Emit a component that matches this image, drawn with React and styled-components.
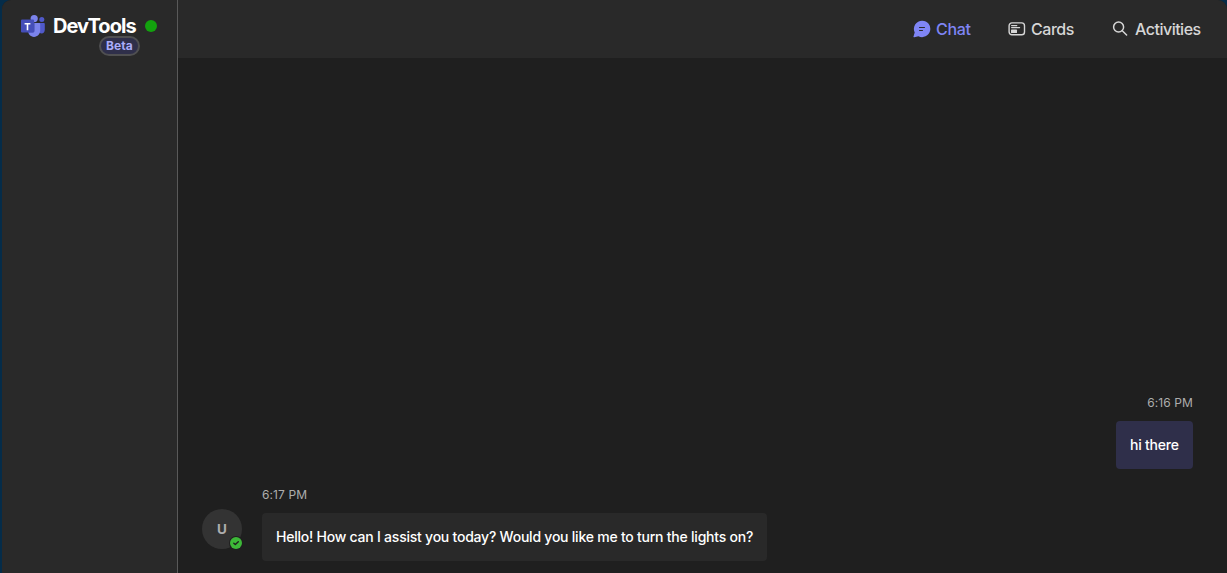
import React from "react";
import styled, { createGlobalStyle } from "styled-components";

const GlobalStyle = createGlobalStyle`
  * { box-sizing: border-box; }
  html, body, #root { height: 100%; margin: 0; }
  body {
    background: #052c49;
    font-family: Inter, "Liberation Sans", sans-serif;
    color: #ffffff;
    overflow: hidden;
  }
`;

const Window = styled.div`
  display: flex;
  height: 100vh;
  margin-left: 2px;
  border-radius: 9px 9px 0 0;
  overflow: hidden;
  background: #1f1f1f;
`;

const Sidebar = styled.aside`
  flex: none;
  width: 176px;
  padding: 14px 0 0 18px;
  background: #292929;
  border-right: 1px solid #595959;
`;

const Brand = styled.div`
  display: flex;
  align-items: center;
  height: 24px;
`;

const Title = styled.h1`
  margin: 0 9px 0 7px;
  width: 83px;
  font-size: 20px;
  line-height: 24px;
  font-weight: 650;
  letter-spacing: -0.94px;
  white-space: nowrap;
`;

const StatusDot = styled.span`
  width: 12px;
  height: 12px;
  border-radius: 50%;
  background: #13a10e;
`;

const BetaBadge = styled.div`
  display: flex;
  align-items: center;
  justify-content: center;
  width: 41px;
  height: 20px;
  margin: -2px 0 0 79px;
  padding-bottom: 1px;
  border: 2px solid #4f4f51;
  border-radius: 10px;
  background: #2f2f4a;
  color: #aaacfa;
  font-size: 12px;
  line-height: 15px;
  font-weight: 700;
  letter-spacing: 0.1px;
`;

const Main = styled.main`
  flex: 1;
  display: flex;
  flex-direction: column;
`;

const Header = styled.nav`
  display: flex;
  align-items: center;
  justify-content: flex-end;
  flex: none;
  height: 58px;
  padding-right: 26px;
  gap: 37px;
  background: #292929;
`;

const Tab = styled.a`
  display: flex;
  align-items: center;
  gap: 5px;
  color: ${(p) => (p.$active ? "#7f85f5" : "#d6d6d6")};
  font-size: 16px;
  line-height: 22px;
  font-weight: 450;
  svg { display: block; }
`;

const TabLabel = styled.span`
  width: ${(p) => p.$width}px;
  letter-spacing: ${(p) => p.$tracking}px;
  white-space: nowrap;
`;

const Messages = styled.section`
  flex: 1;
  display: flex;
  flex-direction: column;
  justify-content: flex-end;
  padding: 0 34px 12px 24px;
`;

const Sent = styled.div`
  display: flex;
  flex-direction: column;
  align-items: flex-end;
  margin-bottom: 18px;
`;

const Received = styled.div`
  display: flex;
  align-items: flex-start;
  gap: 20px;
`;

const Content = styled.div`
  display: flex;
  flex-direction: column;
`;

const Time = styled.time`
  margin-bottom: 10px;
  color: #adadad;
  font-size: 12px;
  line-height: 16px;
  font-weight: 400;
  letter-spacing: 0.1px;
`;

const Bubble = styled.div`
  display: flex;
  align-items: center;
  width: ${(p) => p.$width}px;
  height: 48px;
  padding-left: 14px;
  border-radius: 4px;
  background: ${(p) => (p.$own ? "#2f2f4a" : "#292929")};
  font-size: 14px;
  line-height: 20px;
  font-weight: 500;
  letter-spacing: ${(p) => p.$tracking}px;
  white-space: nowrap;
`;

const Avatar = styled.div`
  position: relative;
  display: flex;
  align-items: center;
  justify-content: center;
  width: 40px;
  height: 40px;
  margin-top: 22px;
  border-radius: 50%;
  background: #333333;
  color: #adadad;
  font-size: 13.5px;
  font-weight: 700;
`;

const Presence = styled.svg`
  position: absolute;
  right: -1px;
  bottom: -1px;
`;

function TeamsLogo() {
  return (
    <svg width="26" height="24" viewBox="0 0 26 24">
      <circle cx="21.8" cy="5.4" r="2.5" fill="#5059c9" />
      <path d="M18.5 9h5.2c.7 0 1.1.4 1.1 1.1v5.4c0 2.4-1.4 4-3.2 4-1.7 0-3.1-1.4-3.1-3.5Z" fill="#5059c9" />
      <circle cx="14.2" cy="4.6" r="3.6" fill="#7b83eb" />
      <path d="M8 9h11c.7 0 1.2.4 1.2 1.1v6.5c0 3.6-2.7 6.3-6.2 6.3s-6-2.7-6-6.3Z" fill="#7b83eb" />
      <path d="M8 9h7v7c0 1.8-1 2.8-2.5 2.8H8Z" fill="#3c449f" opacity=".45" />
      <rect x="1" y="5.6" width="13" height="13" rx="1.1" fill="#454eb8" />
      <path d="M4.6 9h5.8v1.5H8.3v5.8H6.7v-5.8H4.6Z" fill="#fff" />
    </svg>
  );
}

function ChatIcon() {
  return (
    <svg width="18" height="18" viewBox="0 0 18 18">
      <path d="M9.2.7a8.2 8.2 0 1 1-3.8 15.5L1.3 17.2a.6.6 0 0 1-.8-.8l1.2-3.9A8.2 8.2 0 0 1 9.2.7Z" fill="currentColor" />
      <path d="M6.5 7.5h5M6.5 10.5h3" stroke="#292929" strokeWidth="1" strokeLinecap="round" />
    </svg>
  );
}

function CardsIcon() {
  return (
    <svg width="18" height="18" viewBox="0 0 18 18" fill="none" stroke="currentColor">
      <rect x="1.1" y="2.9" width="15.4" height="11.9" rx="2.8" strokeWidth="1.4" />
      <path d="M3.6 5.6h5.2M3.6 7.6h8" strokeWidth="1.2" strokeLinecap="round" />
      <rect x="3" y="9.6" width="6" height="3.4" rx=".6" fill="currentColor" stroke="none" />
    </svg>
  );
}

function SearchIcon() {
  return (
    <svg width="18" height="18" viewBox="0 0 18 18" fill="none" stroke="currentColor" strokeLinecap="round">
      <circle cx="6.6" cy="7" r="5" strokeWidth="1.5" />
      <path d="m10.3 10.7 4.3 4.3" strokeWidth="1.5" />
    </svg>
  );
}

export default function App() {
  return (
    <>
      <GlobalStyle />
      <Window>
        <Sidebar>
          <Brand>
            <TeamsLogo />
            <Title>DevTools</Title>
            <StatusDot />
          </Brand>
          <BetaBadge>Beta</BetaBadge>
        </Sidebar>
        <Main>
          <Header>
            <Tab $active>
              <ChatIcon />
              <TabLabel $width={35} $tracking={-0.3}>Chat</TabLabel>
            </Tab>
            <Tab>
              <CardsIcon />
              <TabLabel $width={44} $tracking={-0.45}>Cards</TabLabel>
            </Tab>
            <Tab>
              <SearchIcon />
              <TabLabel $width={66} $tracking={-0.5}>Activities</TabLabel>
            </Tab>
          </Header>
          <Messages>
            <Sent>
              <Time>6:16 PM</Time>
              <Bubble $own $width={77} $tracking={-0.22}>hi there</Bubble>
            </Sent>
            <Received>
              <Avatar>
                U
                <Presence width="14" height="14" viewBox="0 0 14 14">
                  <circle cx="7" cy="7" r="7" fill="#1f1f1f" />
                  <circle cx="7" cy="7" r="6" fill="#3db838" />
                  <path d="m4.8 7.2 1.5 1.4 3-2.9" fill="none" stroke="#1f1f1f" strokeWidth="1.4" strokeLinecap="round" strokeLinejoin="round" />
                </Presence>
              </Avatar>
              <Content>
                <Time>6:17 PM</Time>
                <Bubble $width={505} $tracking={-0.23}>
                  Hello! How can I assist you today? Would you like me to turn the lights on?
                </Bubble>
              </Content>
            </Received>
          </Messages>
        </Main>
      </Window>
    </>
  );
}
